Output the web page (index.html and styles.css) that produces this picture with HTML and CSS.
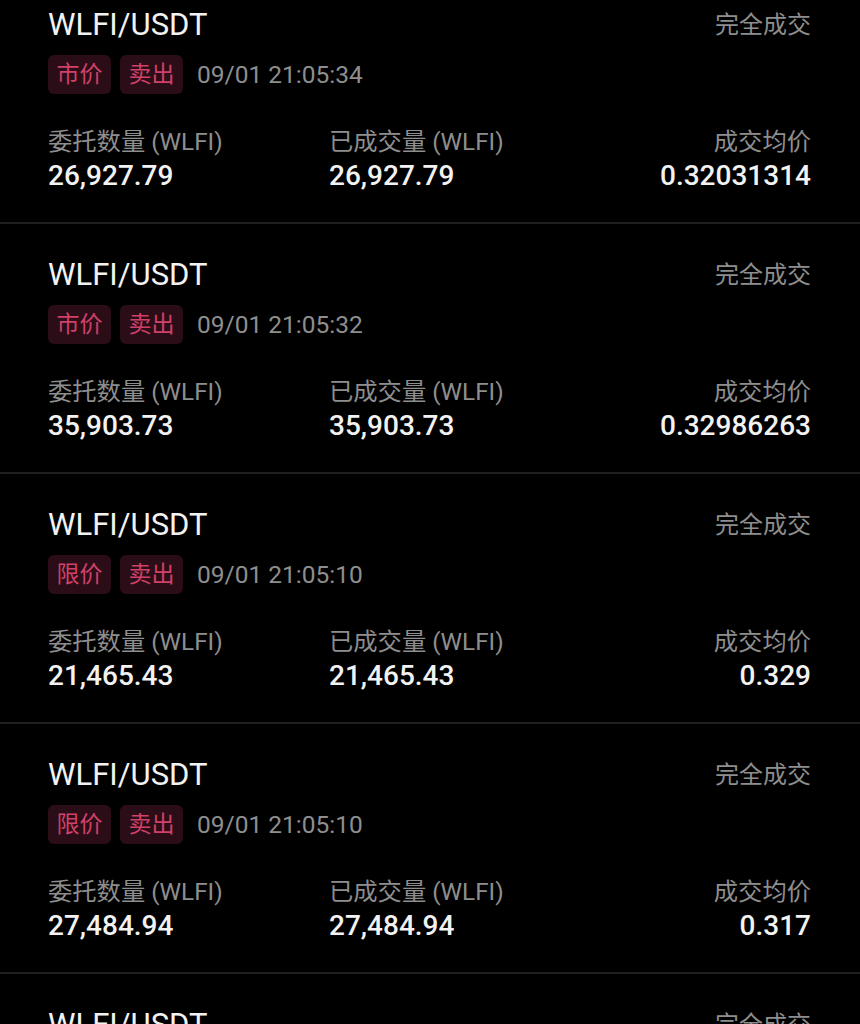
FILE: index.html
```html
<!DOCTYPE html>
<html lang="zh">
<head>
  <meta charset="UTF-8" />
  <title>历史委托</title>
  <link rel="stylesheet" href="styles.css">
</head>
<body>
  <div class="orders" id="orders"></div>

  <script>
    const orders = [
      { type: "市价", time: "09/01 21:05:34", qty: "26,927.79", filled: "26,927.79", avg: "0.32031314" },
      { type: "市价", time: "09/01 21:05:32", qty: "35,903.73", filled: "35,903.73", avg: "0.32986263" },
      { type: "限价", time: "09/01 21:05:10", qty: "21,465.43", filled: "21,465.43", avg: "0.329" },
      { type: "限价", time: "09/01 21:05:10", qty: "27,484.94", filled: "27,484.94", avg: "0.317" },
      { type: "限价", time: "09/01 21:05:02", qty: "20,000.00", filled: "20,000.00", avg: "0.316" }
    ];

    const list = document.getElementById('orders');
    orders.forEach(o => {
      const item = document.createElement('div');
      item.className = 'order';
      item.innerHTML = `
        <div class="order-head">
          <span class="pair">WLFI/USDT</span>
          <span class="status">完全成交</span>
        </div>
        <div class="order-tags">
          <span class="tag">${o.type}</span>
          <span class="tag">卖出</span>
          <span class="time">${o.time}</span>
        </div>
        <div class="order-grid">
          <span class="label">委托数量 (WLFI)</span>
          <span class="label">已成交量 (WLFI)</span>
          <span class="label right">成交均价</span>
          <span class="value">${o.qty}</span>
          <span class="value">${o.filled}</span>
          <span class="value right">${o.avg}</span>
        </div>`;
      list.appendChild(item);
    });
  </script>
</body>
</html>
```

FILE: styles.css
```css
html, body {
  margin: 0;
  padding: 0;
  background: #000;
  font-family: Roboto, "Noto Sans CJK SC", sans-serif;
  overflow: hidden;
}

.orders {
  margin-top: -26px;
}

.order {
  padding: 33px 49px 29px 48px;
  border-bottom: 2px solid #1f1f1f;
}

.order-head {
  display: flex;
  justify-content: space-between;
  align-items: center;
  height: 36px;
}

.pair {
  font-size: 31px;
  color: #f2f2f2;
  line-height: 36px;
}

.status {
  font-size: 24px;
  color: #8e8e8e;
  line-height: 36px;
}

.order-tags {
  display: flex;
  align-items: center;
  gap: 9px;
  margin-top: 12px;
  height: 39px;
}

.tag {
  font-size: 23px;
  line-height: 39px;
  padding: 0 8.5px;
  border-radius: 6px;
  background-color: #2a0d16;
  color: #d0406a;
}

.time {
  margin-left: 5px;
  font-size: 24.5px;
  color: #8e8e8e;
}

.order-grid {
  display: grid;
  grid-template-columns: 281px 1fr auto;
  margin-top: 32px;
}

.label {
  font-size: 24.3px;
  line-height: 32px;
  color: #8e8e8e;
}

.value {
  font-size: 28px;
  font-weight: 500;
  line-height: 34px;
  margin-top: 1px;
  color: #f2f2f2;
}

.right {
  text-align: right;
}
```
